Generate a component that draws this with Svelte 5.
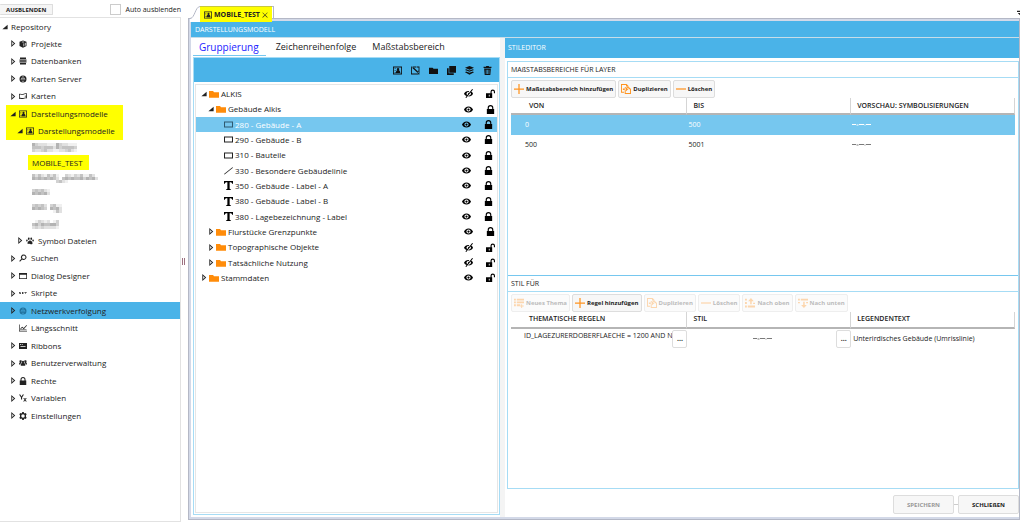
<!-- Repository explorer with the style editor for a display model -->
<script lang="ts">
  // ── Icon paths, all on a 16x16 grid ──────────────────────
  const icons: Record<string, string> = {
    cube: 'M8 1 15 3.5V12l-7 3.5L1 12V3.5zM8 3 5 4l3 1.2L11 4zM9 7v6l1.5-.8V6.4zM12 5.8v5.7l1.3-.6V5.3z',
    database: 'M2 1h12v3H2zM1 5h14v2.6H1zM1 8.6h14v2.6H1zM2 12.2h12V15H2z',
    globe: 'M8 1a7 7 0 1 0 0 14A7 7 0 0 0 8 1zM7.3 2.6v2.2H5.2C5.7 3.6 6.4 2.9 7.3 2.6zM8.7 2.6c.9.3 1.6 1 2.1 2.2H8.7zM4.6 6.2h2.7v1.2H4.4zM8.7 6.2h2.7l.2 1.2H8.7zM4.4 8.8h2.9V10H4.6zM8.7 8.8h2.9l-.2 1.2H8.7zM5.2 11.3h2.1v2.2c-.9-.4-1.6-1.1-2.1-2.2zM8.7 11.3h2.1c-.5 1.1-1.2 1.8-2.1 2.2zM2.3 8.8H3V10h-.4zM13 8.8h.7l-.3 1.2H13z',
    map: 'M0 4c3-2 5 1 8 0s5-2 8-1v10c-3-1-5 0-8 1s-5-2-8 0zM1.5 5v6.5c2.5-.8 4.5 1.4 7 .5s4-1.4 6-1V9h-3V7.500h3V4.200c-2.500-.5-4 .5-6 1.300S4 4.200 1.500 5z',
    model: 'M0 1h16v14H0zM1.5 2.5v11h13v-11zM3 4h1.5v1.500H3zM3 7h1.5v1.500H3zM3 10.500h1.5V12H3zM9 3.500a2.200 2.200 0 0 1 1.300 4c1.700.5 2.700 2.300 2.700 5H5c0-2.700 1-4.500 2.700-5A2.200 2.200 0 0 1 9 3.500z',
    paw: 'M8 7c3 0 5 3 5 5.500S11 15 8 14s-5 1-5-1.500S5 7 8 7zM5.500 1.200c1.200 0 1.800 1 1.800 2.500S6.600 6 5.500 6 3.800 5 3.800 3.700s.6-2.500 1.700-2.500zM10.500 1.200c1.100 0 1.700 1.200 1.700 2.500S11.600 6 10.500 6 8.700 5 8.700 3.700s.6-2.500 1.800-2.500zM1.800 5c1 0 1.600 1 1.600 2.200s-.6 2-1.500 2S.3 8.200.3 7 .8 5 1.800 5zM14.200 5c1 0 1.500.8 1.500 2s-.7 2.200-1.600 2.200-1.500-.8-1.500-2S13.200 5 14.200 5z',
    search: 'M9.500 1a5.500 5.500 0 1 1-3.200 10L2 15.500.5 14l4.300-4.300A5.500 5.500 0 0 1 9.500 1zM9.500 3a3.500 3.500 0 1 0 0 7 3.500 3.500 0 0 0 0-7z',
    window: 'M0 2h16v12H0zM1.500 5.500v7h13v-7z',
    net: 'M0 6h1l2 3V6h1v4H3L1 7.500V10H0zM6 6h3v1H7v.6h2v.8H7V9h2v1H6zM10.500 6H16v1h-2v3h-1V7h-2.500z',
    chart: 'M0 1h1.300v12.500H16V15H0zM3 12V8.500L6.500 5.500l3 2.500L15 2l1 1-6.400 7.300-3.100-2.600L4.300 9.500V12zM4 11h11v1H4z',
    ribbon: 'M0 2h16v12H0zM2 4v1.500h2V4zM5.500 4v1.500h2V4zM3 8.500V10h10V8.500z',
    users: 'M8 3.500a2.300 2.300 0 0 1 1.500 4c2 .5 3 2.300 3 6h-9c0-3.700 1-5.500 3-6a2.300 2.300 0 0 1 1.500-4zM3.500 2.500a2 2 0 0 1 1.800 2.800L4.500 7.500C3.500 8.300 3 9.500 2.800 11H0c0-2.500.6-4 2-4.700a2 2 0 0 1 1.500-3.800zM12.500 2.500A2 2 0 0 1 14 6.300c1.400.7 2 2.200 2 4.700h-2.800c-.2-1.500-.7-2.700-1.700-3.500l-.8-2.200a2 2 0 0 1 1.800-2.800z',
    lock: 'M1.500 7h1.500V5a5 5 0 0 1 10 0v2h1.500v9h-13zM5 7h6V5a3 3 0 0 0-6 0z',
    unlock: 'M0 7.500h8V5a4 4 0 0 1 8 0v2.500h-2V5a2 2 0 0 0-4 0v2.500h1V16H0zM5 10v3.500h1.500V10z',
    variable: 'M0 1h2.500L5 5l2.500-4H10L6.200 7.200V11H4V7.200zM8.500 8h2l1.500 2 1.500-2h2L13 11.500l2.700 3.500h-2.200L12 13l-1.600 2H8.200l2.800-3.500z',
    gear: 'M6.500 0h3l.5 2 1.500.8 2-.8 1.800 2.700L14 6.300v3.400l1.300 1.600-1.800 2.700-2-.8-1.500.8-.5 2h-3L6 14l-1.500-.8-2 .8L.7 11.300 2 9.700V6.300L.7 4.700 2.500 2l2 .8L6 2zM8 4.500a3.500 3.500 0 1 0 0 7 3.500 3.500 0 0 0 0-7z',
    pencil: 'M0 1h9v1.500H1.500v11h11V8H14v7H0zM2 0l10 9.500 3 4-4-2L1 2zM10 1h5v14h-1.500V2.500H10z',
    folder: 'M0 3h6.500l1.500 2h8v9H0z',
    copy: 'M4 0h12v12H4zM0 4h3v9h9v3H0z',
    layers: 'M8 0l8 3.300-8 3.300-8-3.300zM2 5.700l6 2.500 6-2.500 2 1.200-8 3.400L0 6.900zM2 9.600l6 2.600 6-2.600 2 1.300L8 15.500 0 10.900z',
    trash: 'M5.500 0h5v1.500H15v2H1v-2h4.500zM2 4.500h12L13 16H3zM5 6.500v7.500h1.200V6.500zM7.500 6.500v7.500h1.200V6.500zM10 6.500v7.500h1.200V6.500z',
    eye: 'M8 2.500c4 0 6.800 2.500 8 5.500-1.200 3-4 5.500-8 5.500S1.200 11 0 8c1.200-3 4-5.500 8-5.500zM8 4.300a3.700 3.700 0 1 0 0 7.400 3.700 3.700 0 0 0 0-7.400zM8 6a2 2 0 1 1 0 4 2 2 0 0 1 0-4z',
    eyeOff: 'M14.500 0 16 1 4 16l-1.500-1zM9.500 3.500 8.300 5.200C5 5 3 9 6 10.500L4.500 12.300C2 11.400.5 10 0 8.500c1.200-3.300 5-5.700 9.500-5zM13 4.500c1.700 1 2.600 2.400 3 4-1.500 3.500-4.800 5.200-8.500 4.800l1.300-1.700c3 0 4.500-2.800 3-5.300zM7.500 6.500 9 7l-2 2.500z',
    rect: 'M0 2.500h16v11H0zM1.800 4.300v7.400h12.400V4.300z',
    line: 'M15 2l1 1L1 15l-1-1z',
    text: 'M0 0h16v5h-1.500C14 2.500 13 2 10 2v11c0 1.500.5 1.800 2.500 2v1h-9v-1c2-.2 2.500-.5 2.500-2V2C3 2 2 2.500 1.500 5H0z',
    plus: 'M7 0h2v7h7v2H9v7H7V9H0V7h7z',
    minus: 'M0 7h16v2H0z',
    duplicate: 'M0 0h9l3 3v2h-1.500V4H8V1.500H1.500v11H5V14H0zM6 5h7l3 3v8H6zM7.500 6.500v8h7v-6H12v-2zM3 7h5V5l3.500 3.300L8 11.500v-2H3z',
    theme: 'M0 1h3v3H0zM4.500 1H16v3H4.500zM0 5.500h3v3H0zM4.500 5.500H16v3H4.500zM0 10h3v3H0zM4.500 10H10v3H4.500zM11.500 10H13v2h2.500v1.500H13V16h-1.500v-2.500H9.500V12h2z',
    up: 'M0 1h3v3H0zM9.500 0 14 5h-3.300v5H8.300V5H5zM0 6.500h3v3H0zM0 12h3v3H0zM4.500 12H16v3H4.500zM13 7.500h3v2h-3z',
    down: 'M0 1h3v3H0zM4.500 1H16v3H4.500zM0 6.500h3v2H0zM8.300 6h2.400v5H14l-4.500 5L5 11h3.300zM13 6.500h3v2h-3z',
    open: 'M15 2v12H1z',
    closed: 'M3 0l9 8-9 8zM5 4.500v7L8.800 8z',
    cross: 'M2 1l6 6 6-6 1 1-6 6 6 6-1 1-6-6-6 6-1-1 6-6-6-6z',
    overflow: 'M0 2h16v3H0zM2 8h14l-7 7z',
  };

  // ── Repository tree ──────────────────────────────────────
  type Node = { label: string; level: number; icon?: string; state?: 'open' | 'closed'; marked?: boolean; selected?: boolean };

  const nodes: Node[] = [
    { label: 'Repository', level: 0, state: 'open' },
    { label: 'Projekte', level: 1, icon: 'cube', state: 'closed' },
    { label: 'Datenbanken', level: 1, icon: 'database', state: 'closed' },
    { label: 'Karten Server', level: 1, icon: 'globe', state: 'closed' },
    { label: 'Karten', level: 1, icon: 'map', state: 'closed' },
    { label: 'Darstellungsmodelle', level: 1, icon: 'model', state: 'open', marked: true },
    { label: 'Darstellungsmodelle', level: 2, icon: 'model', state: 'open', marked: true },
    { label: '', level: 3 },
    { label: 'MOBILE_TEST', level: 3, marked: true },
    { label: '', level: 3 },
    { label: '', level: 3 },
    { label: '', level: 3 },
    { label: '', level: 3 },
    { label: 'Symbol Dateien', level: 2, icon: 'paw', state: 'closed' },
    { label: 'Suchen', level: 1, icon: 'search', state: 'closed' },
    { label: 'Dialog Designer', level: 1, icon: 'window', state: 'closed' },
    { label: 'Skripte', level: 1, icon: 'net', state: 'closed' },
    { label: 'Netzwerkverfolgung', level: 1, icon: 'globe', state: 'closed', selected: true },
    { label: 'Längsschnitt', level: 1, icon: 'chart' },
    { label: 'Ribbons', level: 1, icon: 'ribbon', state: 'closed' },
    { label: 'Benutzerverwaltung', level: 1, icon: 'users', state: 'closed' },
    { label: 'Rechte', level: 1, icon: 'lock', state: 'closed' },
    { label: 'Variablen', level: 1, icon: 'variable', state: 'closed' },
    { label: 'Einstellungen', level: 1, icon: 'gear', state: 'closed' },
  ];

  // Masked names: rows of grey blocks, 0 = white … 9 = dark
  const masks: Record<number, string[]> = {
    7: ['532221115322111', '444344425344443', '322342211223421'],
    9: ['4242142410032132411420', '5454545420454544535452', '0000000034210000000000'],
    10: ['343421', '545452', '000000'],
    11: ['3434203411', '5454305452', '0000000142'],
    12: ['013212013', '453544553', '232322221'],
  };

  // ── Layer tree ───────────────────────────────────────────
  type Layer = { label: string; level: number; icon: string; state?: 'open' | 'closed'; visible: boolean; locked: boolean };

  const layers: Layer[] = [
    { label: 'ALKIS', level: 0, icon: 'folder', state: 'open', visible: false, locked: false },
    { label: 'Gebäude Alkis', level: 1, icon: 'folder', state: 'open', visible: true, locked: true },
    { label: '280 - Gebäude - A', level: 2, icon: 'rect', visible: true, locked: true },
    { label: '290 - Gebäude - B', level: 2, icon: 'rect', visible: true, locked: true },
    { label: '310 - Bauteile', level: 2, icon: 'rect', visible: true, locked: true },
    { label: '330 - Besondere Gebäudelinie', level: 2, icon: 'line', visible: true, locked: true },
    { label: '350 - Gebäude - Label - A', level: 2, icon: 'text', visible: true, locked: true },
    { label: '380 - Gebäude - Label - B', level: 2, icon: 'text', visible: true, locked: true },
    { label: '380 - Lagebezeichnung - Label', level: 2, icon: 'text', visible: true, locked: true },
    { label: 'Flurstücke Grenzpunkte', level: 1, icon: 'folder', state: 'closed', visible: true, locked: true },
    { label: 'Topographische Objekte', level: 1, icon: 'folder', state: 'closed', visible: false, locked: false },
    { label: 'Tatsächliche Nutzung', level: 1, icon: 'folder', state: 'closed', visible: false, locked: false },
    { label: 'Stammdaten', level: 0, icon: 'folder', state: 'closed', visible: true, locked: false },
  ];

  const tabs = ['Gruppierung', 'Zeichenreihenfolge', 'Maßstabsbereich'];
  const tools = [
    { icon: 'model', label: 'Neues Modell' },
    { icon: 'pencil', label: 'Bearbeiten' },
    { icon: 'folder', label: 'Neue Gruppe' },
    { icon: 'copy', label: 'Kopieren' },
    { icon: 'layers', label: 'Neuer Layer' },
    { icon: 'trash', label: 'Entfernen' },
  ];
  const ranges = [
    { from: '0', to: '500' },
    { from: '500', to: '5001' },
  ];
  const rangeActions = [
    { icon: 'plus', label: 'Maßstabsbereich hinzufügen', on: true },
    { icon: 'duplicate', label: 'Duplizieren', on: true },
    { icon: 'minus', label: 'Löschen', on: true },
  ];
  const ruleActions = [
    { icon: 'theme', label: 'Neues Thema', on: false },
    { icon: 'plus', label: 'Regel hinzufügen', on: true },
    { icon: 'duplicate', label: 'Duplizieren', on: false },
    { icon: 'minus', label: 'Löschen', on: false },
    { icon: 'up', label: 'Nach oben', on: false },
    { icon: 'down', label: 'Nach unten', on: false },
  ];

  let activeTab = $state(0);
  let activeLayer = $state(2);
  let activeRange = $state(0);
</script>

{#snippet icon(name: string)}
  <svg class="icon icon-{name}" viewBox="0 0 16 16" aria-hidden="true">
    <path d={icons[name]} fill="currentColor" fill-rule="evenodd" />
  </svg>
{/snippet}

{#snippet twisty(state: string | undefined)}
  {#if state}
    <button class="twisty" aria-label={state === 'open' ? 'Zuklappen' : 'Aufklappen'}>{@render icon(state)}</button>
  {:else}
    <span class="twisty"></span>
  {/if}
{/snippet}

{#snippet preview()}
  <svg class="preview" viewBox="0 0 19 2" aria-hidden="true">
    <path d="M0 .5h4M4.5 1h2M7 .5h5M12.5 1h1M14 .5h5" stroke="currentColor" stroke-width="1" />
  </svg>
{/snippet}

{#snippet actions(list: { icon: string; label: string; on: boolean }[])}
  <div class="actions">
    {#each list as action}
      <button class="action" disabled={!action.on}>{@render icon(action.icon)}{action.label}</button>
    {/each}
  </div>
{/snippet}

<div class="app">
  <!-- Repository -->
  <aside class="sidebar">
    <header class="sidebar-head">
      <button class="hide">AUSBLENDEN</button>
      <label class="auto"><input type="checkbox" />Auto ausblenden</label>
    </header>
    <ul class="nodes">
      {#each nodes as node, i}
        <li class="node level-{node.level}" class:selected={node.selected} class:marked={node.marked}>
          {#if node.level < 3}{@render twisty(node.state)}{/if}
          {#if node.icon}{@render icon(node.icon)}{/if}
          {#if masks[i]}
            <svg class="mask" viewBox="0 0 68 9" aria-hidden="true">
              {#each masks[i] as row, y}
                {#each row as shade, x}
                  <rect x={x * 3} y={y * 3} width="3" height="3" fill="#777" fill-opacity={Number(shade) / 9} />
                {/each}
              {/each}
            </svg>
          {:else}
            <span class="label">{node.label}</span>
          {/if}
        </li>
      {/each}
    </ul>
  </aside>

  <div class="splitter"><span class="grip"></span></div>

  <!-- Document -->
  <main class="document">
    <div class="strip">
      <svg class="slope" viewBox="0 0 10 16" aria-hidden="true">
        <path d="M0 13C5 12 5 1 10 .5V16H0z" fill="#fff" />
        <path d="M0 12.5C5 12 5 1 10 .5" fill="none" stroke="#b4b8c6" />
      </svg>
      <div class="doc-tab">
        {@render icon('model')}<span>MOBILE_TEST</span>
        <button class="close" aria-label="Schließen">{@render icon('cross')}</button>
      </div>
      <span class="tab-edge"></span>
      <button class="overflow" aria-label="Weitere Tabs">{@render icon('overflow')}</button>
    </div>

    <div class="frame">
      <h1 class="title">DARSTELLUNGSMODELL</h1>
      <div class="columns">
        <section class="groups">
          <div class="tabs" role="tablist">
            {#each tabs as tab, i}
              <button class="tab" role="tab" aria-selected={i === activeTab} class:active={i === activeTab} onclick={() => (activeTab = i)}>{tab}</button>
            {/each}
          </div>
          <div class="group-panel">
            <div class="tools">
              {#each tools as tool}
                <button class="tool" aria-label={tool.label}>{@render icon(tool.icon)}</button>
              {/each}
            </div>
            <ul class="layers">
              {#each layers as layer, i}
                <li class="layer depth-{layer.level}" class:selected={i === activeLayer}>
                  {#if layer.level < 2}{@render twisty(layer.state)}{/if}
                  <button class="layer-name" onclick={() => (activeLayer = i)}>{@render icon(layer.icon)}{layer.label}</button>
                  <button class="flag" aria-label="Sichtbarkeit">{@render icon(layer.visible ? 'eye' : 'eyeOff')}</button>
                  <button class="flag" aria-label="Sperre">{@render icon(layer.locked ? 'lock' : 'unlock')}</button>
                </li>
              {/each}
            </ul>
          </div>
        </section>

        <section class="editor">
          <h2 class="editor-title">STILEDITOR</h2>
          <div class="editor-body">
            <div class="card">
              <h3>MAßSTABSBEREICHE FÜR LAYER</h3>
              {@render actions(rangeActions)}
              <table>
                <thead>
                  <tr><th class="c1">VON</th><th>BIS</th><th>VORSCHAU: SYMBOLISIERUNGEN</th></tr>
                </thead>
                <tbody>
                  {#each ranges as range, i}
                    <tr class:selected={i === activeRange} onclick={() => (activeRange = i)}>
                      <td class="from">{range.from}</td>
                      <td>{range.to}</td>
                      <td>{@render preview()}</td>
                    </tr>
                  {/each}
                </tbody>
              </table>
            </div>
            <div class="card">
              <h3>STIL FÜR</h3>
              {@render actions(ruleActions)}
              <table>
                <thead>
                  <tr><th class="c1">THEMATISCHE REGELN</th><th>STIL</th><th>LEGENDENTEXT</th></tr>
                </thead>
                <tbody>
                  <tr>
                    <td>
                      <div class="cell rule"><span class="clip">ID_LAGEZURERDOBERFLAECHE = 1200 AND N</span><button class="more" aria-label="Regel bearbeiten">...</button></div>
                    </td>
                    <td>
                      <div class="cell"><span class="center">{@render preview()}</span><button class="more" aria-label="Stil bearbeiten">...</button></div>
                    </td>
                    <td class="legend">Unterirdisches Gebäude (Umrisslinie)</td>
                  </tr>
                </tbody>
              </table>
            </div>
          </div>
          <footer class="footer">
            <button class="command" disabled>SPEICHERN</button>
            <span class="dash"></span>
            <button class="command">SCHLIEßEN</button>
          </footer>
        </section>
      </div>
    </div>
  </main>
</div>

<style>
  :global(body) {
    background: #fff;
  }

  .app {
    display: flex;
    height: 100vh;
    overflow: hidden;
    font-family: 'Open Sans', 'Noto Sans', sans-serif;
    font-size: 8px;
    line-height: 12px;
    color: #222;
  }

  .app * {
    box-sizing: border-box;
  }

  button {
    display: flex;
    align-items: center;
    margin: 0;
    padding: 0;
    border: 0;
    background: none;
    color: inherit;
    font: inherit;
    white-space: nowrap;
  }

  ul,
  h1,
  h2,
  h3 {
    margin: 0;
    padding: 0;
    list-style: none;
    font-size: 7px;
    font-weight: 400;
  }

  .icon {
    display: block;
    flex: none;
    width: 8px;
    height: 8px;
  }

  /* ── Sidebar ─────────────────────────────────────────────── */
  .sidebar {
    display: flex;
    flex-direction: column;
    flex: none;
    width: 181px;
  }

  .sidebar-head {
    display: flex;
    align-items: center;
    justify-content: space-between;
    height: 17px;
    padding-top: 2px;
  }

  .hide {
    height: 11px;
    padding: 0 6px;
    border: 1px solid #ddd;
    border-left: 0;
    border-radius: 1px;
    background: #f5f5f5;
    font-size: 6px;
    font-weight: 700;
  }

  .auto {
    display: flex;
    align-items: center;
    gap: 4px;
    font-size: 7px;
    white-space: nowrap;
  }

  .auto input {
    appearance: none;
    width: 11px;
    height: 11px;
    margin: 0;
    border: 1px solid #ccc;
    background: #fff;
  }

  .nodes {
    flex: 1;
    border: 1px solid #e2e2e2;
    border-left: 0;
    font-size: 8px;
  }

  .node {
    display: flex;
    align-items: center;
    height: 18px;
    white-space: nowrap;
  }

  .node:nth-child(even),
  .node:first-child {
    height: 17px;
  }

  .node.level-3 {
    height: 15px;
  }

  .node.level-3:nth-child(3n + 1) {
    height: 16px;
  }

  .node .label {
    padding-left: 4px;
  }

  .twisty {
    flex: none;
    width: 8px;
  }

  .twisty .icon {
    width: 6px;
    height: 6px;
  }

  .twisty .icon-closed {
    width: 7px;
    height: 7px;
  }

  .node .twisty {
    margin-right: 1px;
  }

  .level-0 {
    padding-left: 2px;
  }

  .node.level-0 .label {
    padding-left: 0;
  }

  .level-1 {
    padding-left: 10px;
  }

  .level-2 {
    padding-left: 17px;
  }

  .level-3 {
    padding-left: 28px;
  }

  .level-1.marked,
  .level-2.marked {
    width: 117px;
    margin-left: 6px;
    background: #ff0;
  }

  .level-1.marked {
    padding-left: 4px;
  }

  .level-2.marked {
    padding-left: 11px;
  }

  .level-3.marked .label {
    padding-right: 6px;
    background: #ff0;
    line-height: 15px;
  }

  .node.selected {
    background: #4ab3e8;
  }

  .node.selected .icon-globe {
    color: #20719c;
  }

  .mask {
    width: 68px;
    height: 9px;
    margin-left: 4px;
  }

  .splitter {
    display: flex;
    align-items: center;
    justify-content: center;
    flex: none;
    width: 5px;
  }

  .grip {
    width: 3px;
    height: 7px;
    border: 1px solid #9c7080;
    border-width: 0 1px;
  }

  /* ── Document frame ──────────────────────────────────────── */
  .document {
    display: flex;
    flex-direction: column;
    flex: 1;
    min-width: 0;
    padding: 0 0 2px 2px;
  }

  .strip {
    display: flex;
    align-items: flex-end;
    height: 18px;
    padding-left: 2px;
  }

  .slope {
    width: 10px;
    height: 16px;
    margin-bottom: -4px;
    z-index: 1;
  }

  .doc-tab {
    display: flex;
    align-items: center;
    gap: 2px;
    height: 16px;
    margin-bottom: -4px;
    padding: 0 4px;
    border-top: 1px solid #c8c83c;
    background: #ff0;
    font-size: 7px;
    font-weight: 700;
    z-index: 1;
  }

  .tab-edge {
    width: 2px;
    height: 12px;
    border: 1px solid #b4b8c6;
    border-width: 1px 1px 0 0;
  }

  .close .icon {
    width: 6px;
    height: 6px;
  }

  .overflow {
    margin: 0 -3px 2px auto;
  }

  .overflow .icon {
    width: 6px;
    height: 6px;
  }

  .frame {
    display: flex;
    flex-direction: column;
    flex: 1;
    min-height: 0;
    border: 3px solid #d3d9e8;
    border-right: 0;
    outline: 1px solid #b4b8c6;
    outline-offset: -1px;
  }

  .title {
    flex: none;
    height: 17px;
    padding-left: 4px;
    border-bottom: 1px solid #c8dde8;
    background: #4ab3e8;
    color: #fff;
    line-height: 17px;
  }

  .columns {
    display: flex;
    flex: 1;
    min-height: 0;
  }

  /* ── Layer groups ────────────────────────────────────────── */
  .groups {
    display: flex;
    flex-direction: column;
    flex: none;
    width: 314px;
    border-right: 5px solid #f4f4f4;
    padding-bottom: 2px;
  }

  .tabs {
    display: flex;
    align-items: flex-end;
    flex: none;
    height: 18px;
    padding-left: 2px;
    gap: 4px;
  }

  .tab {
    height: 18px;
    padding: 0 6px;
    font-size: 9px;
  }

  .tab.active {
    padding-right: 7px;
    border-bottom: 1px solid #76c7ef;
    font-size: 10px;
    color: #22f;
  }

  .group-panel {
    display: flex;
    flex-direction: column;
    flex: 1;
    margin: 1px 0 0 2px;
    border: 1px solid #a6dcf5;
  }

  .tools {
    display: flex;
    align-items: center;
    justify-content: flex-end;
    gap: 9px;
    height: 24px;
    padding-right: 7px;
    background: #4ab3e8;
    color: #111;
  }

  .tool .icon {
    width: 9px;
    height: 9px;
  }

  .layers {
    flex: 1;
    margin: 2px 1px 1px;
    padding: 1px 0;
    border: 1px solid #e6e6e6;
    font-size: 8px;
  }

  .layer {
    display: flex;
    align-items: center;
    height: 15px;
    padding-right: 2px;
  }

  .layer:nth-child(3n + 2) {
    height: 16px;
  }

  .layer-name {
    flex: 1;
    gap: 2px;
  }

  .depth-0 {
    padding-left: 5px;
  }

  .depth-1 {
    padding-left: 12px;
  }

  .depth-2 {
    padding: 0 4px 0 28px;
  }

  .layer.selected {
    background: #76c7ef;
  }

  .layer.selected .layer-name {
    color: #fff;
  }

  .layer.selected .icon-rect {
    color: #2f5a70;
  }

  .layer-name .icon {
    width: 9px;
    height: 9px;
  }

  .layer-name .icon-folder {
    width: 10px;
    height: 10px;
    color: #ff8c0a;
  }

  .layer-name .icon-text {
    color: #000;
  }

  .flag {
    width: 9px;
    margin-left: 13px;
    color: #000;
  }

  .flag .icon {
    width: 9px;
    height: 9px;
  }

  /* ── Style editor ────────────────────────────────────────── */
  .editor {
    display: flex;
    flex-direction: column;
    flex: 1;
    min-width: 0;
    font-size: 7px;
  }

  .editor-title {
    flex: none;
    height: 20px;
    padding-left: 3px;
    background: #4ab3e8;
    color: #fff;
    line-height: 20px;
  }

  .editor-body {
    display: flex;
    flex-direction: column;
    flex: 1;
    margin: 3px 1px 0 2px;
    border: 1px solid #a6dcf5;
  }

  .card {
    flex: 1 1 0;
    min-height: 0;
  }

  .card + .card {
    border-top: 1px solid #76c7ef;
  }

  .card h3 {
    height: 16px;
    padding-left: 3px;
    border-bottom: 1px solid #a6dcf5;
    line-height: 15px;
  }

  .actions {
    display: flex;
    gap: 2px;
    padding: 2px 3px 0;
  }

  .action {
    gap: 2px;
    height: 18px;
    padding: 0 2px;
    border: 1px solid #ddd;
    border-radius: 2px;
    background: #f7f7f7;
    font-size: 6px;
    font-weight: 700;
  }

  .action .icon {
    width: 10px;
    height: 10px;
    color: #ff9420;
  }

  .action:disabled {
    border-color: #eee;
    background: #fbfbfb;
    color: #bbb;
  }

  .action:disabled .icon {
    opacity: 0.35;
  }

  table {
    width: calc(100% - 6px);
    margin-left: 3px;
    border-collapse: separate;
    border-spacing: 0;
    table-layout: fixed;
  }

  th,
  td {
    padding: 0 0 0 1px;
    text-align: left;
    white-space: nowrap;
  }

  th {
    height: 17px;
    padding-left: 6px;
    border-right: 1px solid #d5d5d5;
    border-bottom: 2px solid #b5b5b5;
    font-weight: 600;
  }

  th.c1 {
    width: 35%;
    padding-left: 18px;
  }

  td {
    height: 20px;
  }

  td.from {
    padding-left: 14px;
  }

  tr.selected {
    background: #76c7ef;
    color: #fff;
  }

  .preview {
    display: block;
    width: 19px;
    height: 2px;
    opacity: 0.6;
  }

  .selected .preview {
    opacity: 1;
  }

  .cell {
    display: flex;
    align-items: center;
  }

  .rule {
    padding-left: 12px;
  }

  .clip {
    flex: 1;
    align-self: flex-start;
    overflow: hidden;
  }

  .center {
    display: flex;
    flex: 1;
    justify-content: center;
  }

  .more {
    justify-content: center;
    flex: none;
    width: 15px;
    height: 18px;
    border: 1px solid #ddd;
    border-radius: 2px;
    background: #fff;
    font-weight: 700;
  }

  td.legend {
    padding-left: 2px;
  }

  /* ── Footer ──────────────────────────────────────────────── */
  .footer {
    display: flex;
    align-items: center;
    justify-content: flex-end;
    flex: none;
    height: 28px;
    padding: 3px 1px 0 0;
  }

  .command {
    justify-content: center;
    width: 61px;
    height: 19px;
    border: 1px solid #ddd;
    border-radius: 2px;
    background: #f7f7f7;
    font-size: 6px;
    font-weight: 700;
  }

  .command:disabled {
    color: #999;
  }

  .dash {
    width: 4px;
    height: 1px;
    background: #ccc;
  }
</style>
